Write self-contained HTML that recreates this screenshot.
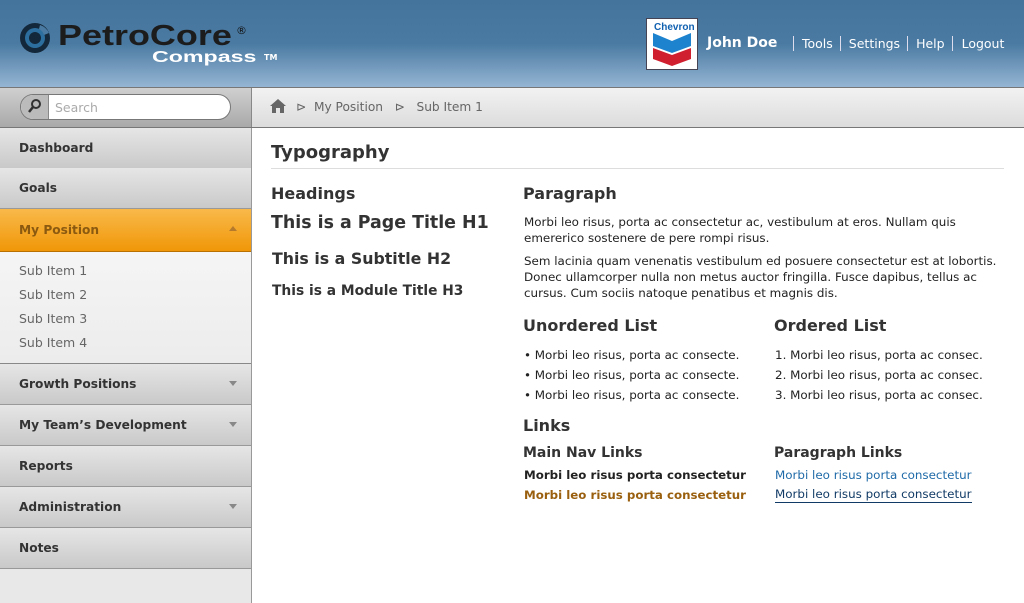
<!DOCTYPE html>
<html><head><style>
*{margin:0;padding:0;box-sizing:border-box}
body{width:1024px;height:603px;overflow:hidden;font-family:"DejaVu Sans","Liberation Sans",sans-serif;background:#fff;position:relative;color:#222}
.a{position:absolute;white-space:nowrap}
#hdr{position:absolute;left:0;top:0;width:1024px;height:87px;background:linear-gradient(#44739c 0%,#4a7aa2 50%,#95b5d3 100%)}
#bar{position:absolute;left:0;top:87px;width:1024px;height:41px;background:linear-gradient(#f2f2f2,#dcdcdc);border-top:1px solid #777;border-bottom:1px solid #777}
#side{position:absolute;left:0;top:128px;width:252px;height:475px;background:#e8e8e8;border-right:1px solid #999}
.nav{position:absolute;left:0;width:251px;height:41px;background:linear-gradient(#e6e6e6,#c9c9c9);border-bottom:1px solid #999;font-weight:bold;font-size:12.2px;color:#333;padding:13px 0 0 19px}
.car{position:absolute;right:14px;top:17px;width:0;height:0;border-left:4px solid transparent;border-right:4px solid transparent;border-top:5px solid #888}
.sub{font-size:12.5px;color:#666}
.p{font-size:11.9px;line-height:16px;color:#222}
</style></head><body>
<div id="hdr"></div>
<svg class="a" style="left:18px;top:21px" width="36" height="34" viewBox="0 0 36 34">
<circle cx="17" cy="17" r="15" fill="#13283a"/>
<circle cx="17" cy="17" r="10" fill="#2c6f9e"/>
<circle cx="17" cy="17" r="6" fill="#13283a"/>
<path d="M22 4 A15 15 0 0 1 31 12 L26 14 A10 10 0 0 0 21 8 Z" fill="#4a7aa2"/>
</svg>
<div class="a" style="left:58px;top:20px;font-family:'Liberation Sans',sans-serif;font-weight:bold;font-size:29px;line-height:32px;color:#1c1c1c;transform:scaleX(1.24);transform-origin:left">PetroCore</div>
<div class="a" style="left:236px;top:24px;font-size:11px;color:#111">®</div>
<div class="a" style="left:152px;top:49px;font-family:'Liberation Sans',sans-serif;font-weight:bold;font-size:16px;line-height:18px;color:#fff;transform:scaleX(1.45);transform-origin:left">Compass</div>
<div class="a" style="left:264px;top:53px;font-size:8px;color:#fff;font-weight:bold">TM</div>
<div class="a" style="left:646px;top:18px;width:52px;height:52px;background:#fff;border:1px solid #445"></div>
<div class="a" style="left:654px;top:22px;font-family:'Liberation Sans',sans-serif;font-weight:bold;font-size:10px;color:#1060b0">Chevron</div>
<svg class="a" style="left:653px;top:33px" width="38" height="33" viewBox="0 0 38 33">
<path d="M0 0 L19 8 L38 0 L38 13 L19 20 L0 13Z" fill="#1d83cf"/>
<path d="M0 15 L19 22 L38 15 L38 26 L19 33 L0 26Z" fill="#d01f2f"/>
</svg>
<div class="a" style="left:707px;top:35px;font-weight:bold;font-size:14px;color:#fff">John Doe</div>
<div class="a" style="left:793px;top:36px;font-size:12.5px;color:#fff">
<span style="border-left:1px solid #dde;padding:0 7px 0 8px">Tools</span><span style="border-left:1px solid #dde;padding:0 7px 0 8px">Settings</span><span style="border-left:1px solid #dde;padding:0 7px 0 8px">Help</span><span style="border-left:1px solid #dde;padding:0 0 0 9px">Logout</span></div>
<div id="bar"></div>
<div class="a" style="left:0;top:88px;width:252px;height:39px;background:linear-gradient(#d0d0d0,#a9a9a9);border-right:1px solid #888"></div>
<div class="a" style="left:20px;top:94px;width:211px;height:26px;border-radius:13px;background:#fff;border:1px solid #777;overflow:hidden">
<div style="position:absolute;left:0;top:0;width:28px;height:24px;background:#bbb;border-right:1px solid #888"></div>
<div style="position:absolute;left:34px;top:5px;font-size:12.5px;color:#aaa">Search</div></div>
<svg class="a" style="left:28px;top:98px" width="14" height="16" viewBox="0 0 14 16"><circle cx="8" cy="6" r="4" fill="none" stroke="#333" stroke-width="2"/><path d="M5 9 L1 14" stroke="#333" stroke-width="2.5"/></svg>
<svg class="a" style="left:270px;top:99px" width="16" height="14" viewBox="0 0 16 14"><path d="M8 0 L16 7 L14 7 L14 14 L10 14 L10 9 L6 9 L6 14 L2 14 L2 7 L0 7Z" fill="#666"/></svg>
<div class="a" style="left:296px;top:100px;font-size:12.2px;color:#666">⊳&nbsp;&nbsp;My Position&nbsp;&nbsp;&nbsp;⊳&nbsp;&nbsp;&nbsp;Sub Item 1</div>
<div id="side"></div>
<div class="nav" style="top:128px">Dashboard</div>
<div class="nav" style="top:168px">Goals</div>
<div class="nav" style="top:209px;height:43px;background:linear-gradient(#f9b94a,#f09708);border-bottom:1px solid #b87000;color:#8b5a10;padding-top:14px">My Position<div class="car" style="border-top:0;border-bottom:5px solid #b67a2c"></div></div>
<div class="a" style="left:0;top:252px;width:251px;height:112px;background:linear-gradient(#f5f5f5,#ececec);border-bottom:1px solid #888"></div>
<div class="a sub" style="left:19px;top:263px">Sub Item 1</div>
<div class="a sub" style="left:19px;top:287px">Sub Item 2</div>
<div class="a sub" style="left:19px;top:311px">Sub Item 3</div>
<div class="a sub" style="left:19px;top:335px">Sub Item 4</div>
<div class="nav" style="top:364px">Growth Positions<div class="car"></div></div>
<div class="nav" style="top:405px">My Team’s Development<div class="car"></div></div>
<div class="nav" style="top:446px">Reports</div>
<div class="nav" style="top:487px">Administration<div class="car"></div></div>
<div class="nav" style="top:528px">Notes</div>
<div class="a" style="left:271px;top:142px;font-weight:bold;font-size:18px;color:#333">Typography</div>
<div class="a" style="left:271px;top:168px;width:733px;height:1px;background:#ddd"></div>
<div class="a" style="left:271px;top:184px;font-weight:bold;font-size:16px;color:#333">Headings</div>
<div class="a" style="left:271px;top:213px;font-weight:bold;font-size:17.4px;color:#333">This is a Page Title H1</div>
<div class="a" style="left:272px;top:249px;font-weight:bold;font-size:15.8px;color:#333">This is a Subtitle H2</div>
<div class="a" style="left:272px;top:283px;font-weight:bold;font-size:13.8px;color:#333">This is a Module Title H3</div>
<div class="a" style="left:523px;top:184px;font-weight:bold;font-size:16px;color:#333">Paragraph</div>
<div class="a p" style="left:524px;top:214px">Morbi leo risus, porta ac consectetur ac, vestibulum at eros. Nullam quis<br>emererico sostenere de pere rompi risus.</div>
<div class="a p" style="left:524px;top:253px">Sem lacinia quam venenatis vestibulum ed posuere consectetur est at lobortis.<br>Donec ullamcorper nulla non metus auctor fringilla. Fusce dapibus, tellus ac<br>cursus. Cum sociis natoque penatibus et magnis dis.</div>
<div class="a" style="left:523px;top:316px;font-weight:bold;font-size:16px;color:#333">Unordered List</div>
<div class="a p" style="left:524px;top:345px;line-height:20px">• Morbi leo risus, porta ac consecte.<br>• Morbi leo risus, porta ac consecte.<br>• Morbi leo risus, porta ac consecte.</div>
<div class="a" style="left:774px;top:316px;font-weight:bold;font-size:16px;color:#333">Ordered List</div>
<div class="a p" style="left:775px;top:345px;line-height:20px">1. Morbi leo risus, porta ac consec.<br>2. Morbi leo risus, porta ac consec.<br>3. Morbi leo risus, porta ac consec.</div>
<div class="a" style="left:523px;top:416px;font-weight:bold;font-size:16px;color:#333">Links</div>
<div class="a" style="left:523px;top:445px;font-weight:bold;font-size:14px;color:#333">Main Nav Links</div>
<div class="a" style="left:774px;top:445px;font-weight:bold;font-size:14px;color:#333">Paragraph Links</div>
<div class="a" style="left:524px;top:468px;font-weight:bold;font-size:11.8px;color:#222">Morbi leo risus porta consectetur</div>
<div class="a" style="left:524px;top:488px;font-weight:bold;font-size:11.8px;color:#9a6010">Morbi leo risus porta consectetur</div>
<div class="a p" style="left:775px;top:467px;color:#1f6aa8">Morbi leo risus porta consectetur</div>
<div class="a p" style="left:775px;top:487px;color:#113b66;border-bottom:1px solid #113b66;line-height:15px">Morbi leo risus porta consectetur</div>
</body></html>
